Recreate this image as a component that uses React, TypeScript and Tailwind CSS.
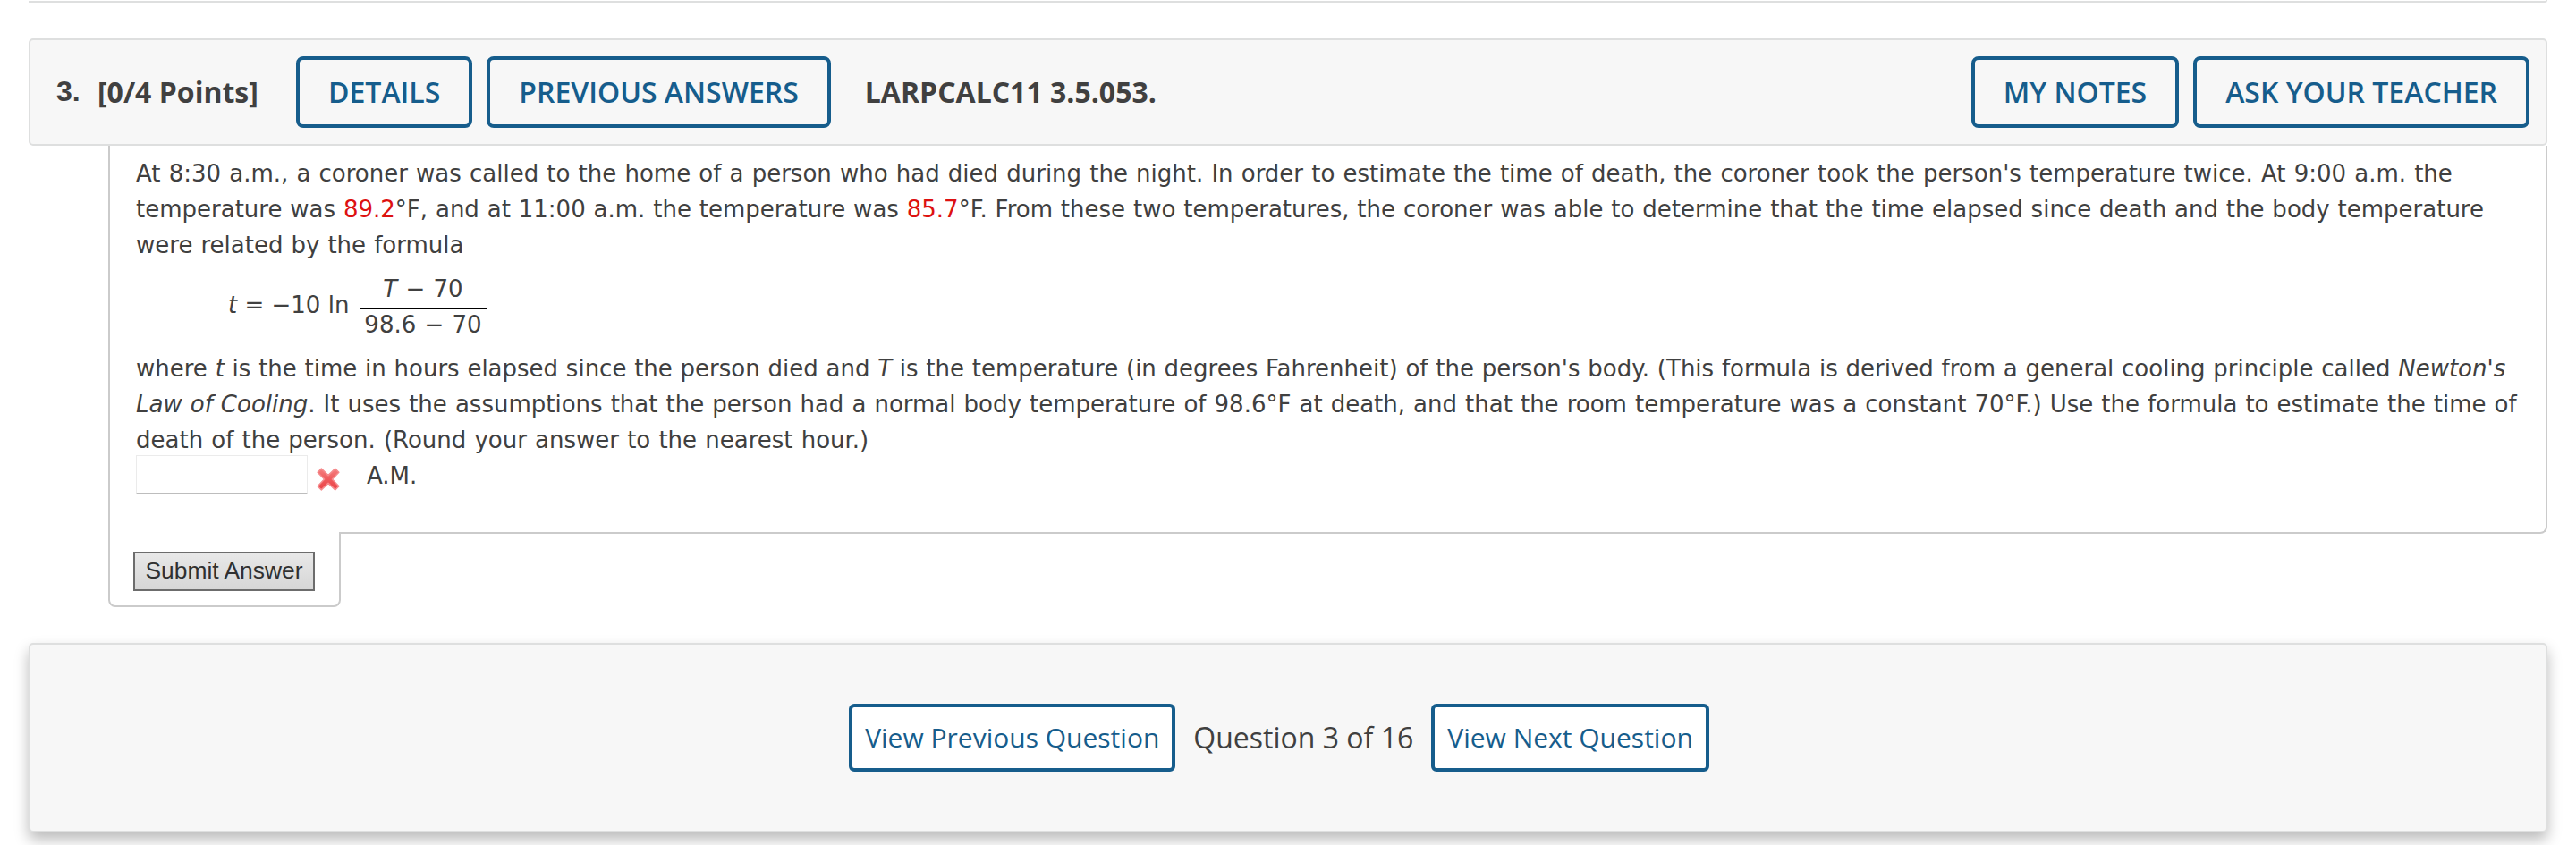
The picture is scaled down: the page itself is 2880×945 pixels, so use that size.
import type { ReactNode } from 'react';

type ButtonProps = {
  children: ReactNode;
};

function HeaderButton({ children }: ButtonProps) {
  return (
    <button className="h-20 shrink-0 rounded-[8px] border-4 border-[#165d8c] px-8 text-[32px] font-semibold leading-none whitespace-nowrap text-[#165d8c]">
      {children}
    </button>
  );
}

function NavButton({ children }: ButtonProps) {
  return (
    <button className="h-[76px] shrink-0 rounded-[6px] border-4 border-[#165d8c] bg-white px-[14px] text-[30px] leading-none whitespace-nowrap text-[#165d8c]">
      {children}
    </button>
  );
}

function WrongMark() {
  return (
    <svg width="28" height="28" viewBox="0 0 28 28" className="shrink-0">
      <defs>
        <linearGradient id="wrong" x1="0" y1="0" x2="0" y2="1">
          <stop offset="0" stopColor="#f58080" />
          <stop offset="0.5" stopColor="#ef5a5c" />
          <stop offset="1" stopColor="#ea4044" />
        </linearGradient>
      </defs>
      <path
        d="M6.2 2.2 L14 9.6 L21.8 2.2 L25.8 6.2 L18.4 14 L25.8 21.8 L21.8 25.8 L14 18.4 L6.2 25.8 L2.2 21.8 L9.6 14 L2.2 6.2 Z"
        fill="url(#wrong)"
        stroke="#f58a8c"
        strokeWidth="1.6"
        strokeLinejoin="round"
      />
    </svg>
  );
}

function Formula() {
  return (
    <div className="flex h-[98px] items-start pt-[9px] pl-[103px]">
      <div className="mt-[18px] w-[147px] whitespace-nowrap">
        <i>t</i> = −10 ln
      </div>
      <div className="w-[142px] text-center">
        <div className="h-[41px] [word-spacing:1px]">
          <i>T</i> − 70
        </div>
        <div className="h-[2px] bg-black" />
        <div className="leading-[34px] [word-spacing:1px]">98.6 − 70</div>
      </div>
    </div>
  );
}

export default function App() {
  return (
    <div className="h-[945px] w-[2880px] overflow-hidden bg-white px-8 font-['Open_Sans',sans-serif] text-[#404040]">
      {/* bottom edge of the previous question */}
      <div className="h-[3px] rounded-br-[3px] border-r-2 border-b-2 border-[#dedfdf]" />

      <div className="mt-10 flex h-[120px] items-center rounded-[5px] border-2 border-[#dedfdf] bg-[#f7f7f7] pr-[18px] pl-[29px]">
        <div className="w-[46px] pb-[3px] font-['Liberation_Sans',sans-serif] text-[32px] font-bold">3.</div>
        <div className="w-[222px] text-[32px] font-bold whitespace-nowrap">[0/4 Points]</div>
        <div className="flex gap-4">
          <HeaderButton>DETAILS</HeaderButton>
          <HeaderButton>PREVIOUS ANSWERS</HeaderButton>
        </div>
        <div className="ml-[38px] flex-1 text-[32px] font-bold whitespace-nowrap">LARPCALC11 3.5.053.</div>
        <div className="flex gap-4">
          <HeaderButton>MY NOTES</HeaderButton>
          <HeaderButton>ASK YOUR TEACHER</HeaderButton>
        </div>
      </div>

      <div className="ml-[89px] h-[434px] rounded-br-[8px] border-r-2 border-b-2 border-l-2 border-[#cbcbcb] pt-[11px] pl-[29px] font-['DejaVu_Sans',sans-serif] text-[26px] leading-[40px]">
        <p className="whitespace-nowrap [word-spacing:0.9px]">
          At 8:30 a.m., a coroner was called to the home of a person who had died during the night. In order to estimate the time of death, the coroner took the person's temperature twice. At 9:00 a.m. the
        </p>
        <p className="whitespace-nowrap [word-spacing:0.62px]">
          temperature was <span className="text-[#dd1111]">89.2</span>°F, and at 11:00 a.m. the temperature was{' '}
          <span className="text-[#dd1111]">85.7</span>°F. From these two temperatures, the coroner was able to determine that the time elapsed since death and the body temperature
        </p>
        <p className="whitespace-nowrap [word-spacing:0.8px]">were related by the formula</p>

        <Formula />

        <p className="whitespace-nowrap [word-spacing:0.5px]">
          where <i>t</i> is the time in hours elapsed since the person died and <i>T</i> is the temperature (in degrees Fahrenheit) of the person's body. (This formula is derived from a general cooling principle called <i>Newton's</i>
        </p>
        <p className="whitespace-nowrap [word-spacing:0.8px]">
          <i>Law of Cooling</i>. It uses the assumptions that the person had a normal body temperature of 98.6°F at death, and that the room temperature was a constant 70°F.) Use the formula to estimate the time of
        </p>
        <p className="whitespace-nowrap [word-spacing:0.9px]">death of the person. (Round your answer to the nearest hour.)</p>

        <div className="flex items-start">
          <div className="-mt-[3px] h-[44px] w-[192px] border-x border-t border-b-2 border-[#ebebeb] border-b-[#bdbdbd] bg-white" />
          <div className="mt-[10px] ml-[9px]">
            <WrongMark />
          </div>
          <span className="ml-[29px]">A.M.</span>
        </div>
      </div>

      {/* tab that hangs under the question box */}
      <div className="relative -mt-[2px] ml-[89px] h-[84px] w-[260px] rounded-b-[8px] border-r-2 border-b-2 border-l-2 border-[#cbcbcb] bg-white pt-[22px] pl-[26px]">
        <button className="flex h-11 w-[203px] items-center justify-center border-2 border-[#6c6c6c] bg-linear-to-b from-[#e8e8e8] to-[#d6d6d6] pb-[1px] font-['Liberation_Sans',sans-serif] text-[26.4px] whitespace-nowrap text-[#303030]">
          Submit Answer
        </button>
      </div>

      <div className="mt-10 flex h-[212px] items-center justify-center rounded-[5px] border-2 border-[#dedfdf] bg-[#f7f7f7] pr-5 shadow-[0_8px_16px_rgba(0,0,0,0.27)]">
        <NavButton>View Previous Question</NavButton>
        <span className="mx-[20px] text-[32px] whitespace-nowrap">Question 3 of 16</span>
        <NavButton>View Next Question</NavButton>
      </div>
    </div>
  );
}
